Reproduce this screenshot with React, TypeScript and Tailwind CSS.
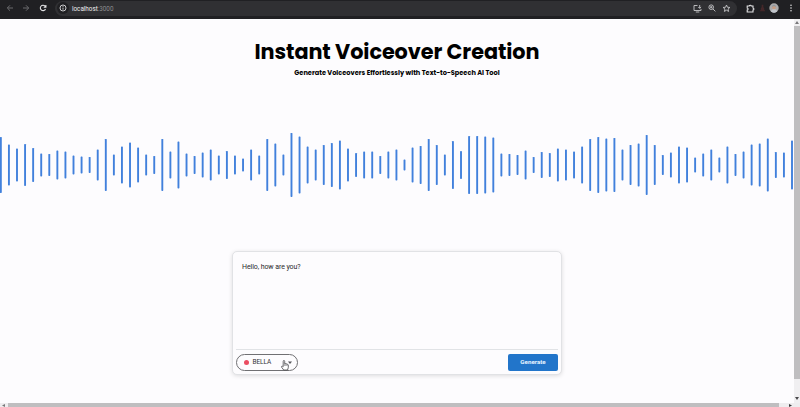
import React from "react";

const heights = [
  56, 41, 33, 42, 34, 23, 22, 29, 27, 19, 17, 16, 31, 52, 21, 37, 45, 35, 21, 18, 52, 27, 47, 23, 18,
  25, 31, 19, 28, 19, 13, 31, 19, 52, 43, 21, 64, 57, 37, 31, 40, 44, 49, 33, 24, 27, 27, 18, 27, 31,
  11, 35, 38, 52, 40, 21, 48, 28, 58, 58, 57, 55, 23, 22, 20, 29, 16, 26, 24, 33, 31, 27, 37, 52, 56,
  53, 54, 31, 40, 43, 60, 40, 20, 25, 37, 35, 15, 23, 31, 15, 37, 22, 27, 41, 43, 53, 26, 25, 49,
];

function BrowserBar() {
  return (
    <header className="flex h-[19px] shrink-0 items-center bg-[#202023] pb-[3px] text-[#c7c7c9]">
      <svg className="ml-[6px] h-2 w-2 text-[#6b6b6e]" viewBox="0 0 8 8" fill="none" stroke="currentColor">
        <path d="M7 4H1.5M4 1.3 1.3 4 4 6.7" />
      </svg>
      <svg className="ml-2 h-2 w-2 text-[#6b6b6e]" viewBox="0 0 8 8" fill="none" stroke="currentColor">
        <path d="M1 4h5.500M4 1.300 6.700 4 4 6.700" />
      </svg>
      <svg className="ml-[9px] h-2 w-2 text-[#e4e4e6]" viewBox="0 0 8 8" fill="none" stroke="currentColor" strokeWidth="1.100">
        <path d="M6.500 5A2.700 2.700 0 1 1 6 2.100L6.700 3M6.900 1v2.200H4.700" />
      </svg>
      <div className="ml-2 flex h-[15px] w-[682px] items-center rounded-full bg-[#303033]">
        <span className="ml-[2px] flex h-[12px] w-[12px] items-center justify-center rounded-full bg-[#202023]">
          <svg className="h-2 w-2" viewBox="0 0 8 8" fill="none" stroke="#dededf" strokeWidth="0.900">
            <circle cx="4" cy="4" r="3" />
            <path d="M4 3.600V5.700M4 2v.8" />
          </svg>
        </span>
        <span className="ml-[3px] mt-px font-[Roboto,sans-serif] text-[6.3px] leading-[10px] text-[#eeeeef]">
          localhost<span className="text-[#8c8c8f]">:3000</span>
        </span>
        <svg className="ml-auto h-[9px] w-[9px]" viewBox="0 0 9 9" fill="none" stroke="currentColor" strokeWidth="0.900">
          <path d="M4.500 1.500H1v5h7V5M2.800 8h3.500M6.700 1v3.200M5.300 3 6.700 4.400 8.100 3" />
        </svg>
        <svg className="ml-[6px] h-2 w-2" viewBox="0 0 8 8" fill="none" stroke="currentColor" strokeWidth="0.900">
          <circle cx="3.200" cy="3.200" r="2.300" />
          <path d="M4.900 4.900 7.400 7.400M2 3.200h2.400M3.200 2v2.400" />
        </svg>
        <svg className="ml-[6px] mr-[6px] h-[9px] w-[9px]" viewBox="0 0 9 9" fill="none" stroke="currentColor" strokeWidth="0.900">
          <path d="m4.500 1 .95 2.250 2.450.2-1.850 1.600.55 2.400-2.100-1.270-2.100 1.270.55-2.400L1.100 3.450l2.450-.2Z" />
        </svg>
      </div>
      <svg className="ml-[9px] h-[9px] w-[9px] text-[#e2e2e4]" viewBox="0 0 9 9" fill="none" stroke="currentColor" strokeWidth="1.100">
        <path d="M1.200 2H3.200C3.200.9 5.200.9 5.200 2H7v2c1.200 0 1.200 2 0 2v2H1.200V6c1.200 0 1.200-2 0-2Z" />
      </svg>
      <svg className="ml-[5px] h-2 w-[5px]" viewBox="0 0 6 8" fill="#442729">
        <path d="M2 0h2v3l1 1v2l1 1v1H0V7l1-1V4l1-1Z" />
      </svg>
      <svg className="ml-[4px] h-[10px] w-[10px]" viewBox="0 0 10 10">
        <circle cx="5" cy="5" r="4.700" fill="#aaa9aa" />
        <path d="M2 8.500C2 5 8 5 8 8.500A4.700 4.700 0 0 1 2 8.500" fill="#c1c5cb" />
        <circle cx="5" cy="4.400" r="1.900" fill="#c79c82" />
        <path d="M3 4c0-3 4-3 4 0L5 3Z" fill="#8c969e" />
      </svg>
      <svg className="ml-[10px] h-2 w-[4px]" viewBox="0 0 4 8" fill="#dddddf">
        <circle cx="2" cy="1.200" r=".8" />
        <circle cx="2" cy="4" r=".8" />
        <circle cx="2" cy="6.800" r=".8" />
      </svg>
    </header>
  );
}

function Waveform() {
  return (
    <svg className="mt-[54px] block h-[66px] w-full shrink-0" viewBox="0 0 794 66" preserveAspectRatio="none">
      {heights.map((h, i) => (
        <rect key={i} x={i * 8.073 - 0.1} y={32.9 - h / 2} width="1.900" height={h} rx="0.700" fill="#4180dc" />
      ))}
    </svg>
  );
}

function VoiceCard() {
  return (
    <section className="mx-auto mt-[53px] flex h-[124px] w-[330px] shrink-0 flex-col rounded-[5px] border border-[#e1e2e5] bg-[#fdfcfe] px-[3px] shadow-[0_1px_4px_rgba(0,0,0,0.13)]">
      <div className="h-[98px] border-b border-[#e1e3e6] px-[6px] pt-[10px] font-[Roboto,sans-serif] text-[7px] leading-[10px] tracking-[-0.08px] text-[#29292c]">
        Hello, how are you?
      </div>
      <div className="mt-[4px] flex items-start justify-between">
        <button className="relative flex h-[17px] w-[62px] items-center rounded-full border border-[#707073] pl-[7px] font-[Roboto,sans-serif] text-[6.5px] tracking-[-0.1px] text-[#363639]">
          <span className="mr-[3.5px] h-[5px] w-[5px] rounded-full bg-[#eb4d62]" />
          BELLA
          <svg className="absolute right-[5px] top-[6px] h-[4px] w-[4px]" viewBox="0 0 4 4" fill="#55555a">
            <path d="M0 .5h4L2 3Z" />
          </svg>
          <svg className="absolute left-[44px] top-[5px] h-[11px] w-[8px]" viewBox="0 0 8 11" fill="#fff" stroke="#46464a" strokeWidth=".8" strokeLinejoin="round">
            <path d="M2.200 6.700V1.400c0-1.300 1.500-1.300 1.500 0v2.500c.2-.6 1.200-.5 1.200.2.300-.5 1.200-.3 1.200.4.400-.4 1.200-.1 1.200.6v2.500L6.500 10H2.700L.6 7.200c-.5-.8.400-1.400 1-.9Z" />
            <path d="M3.700 4v2M4.900 4.200V6M6.100 4.700V6" strokeWidth=".5" />
          </svg>
        </button>
        <button className="h-[17px] w-[50px] rounded-[2px] bg-[#2275ca] font-[Roboto,sans-serif] text-[6.2px] font-bold leading-[17px] text-[#e8f3ff]">
          Generate
        </button>
      </div>
    </section>
  );
}

function VerticalScrollbar() {
  return (
    <aside className="flex w-[6px] shrink-0 flex-col items-center bg-[#f0eff1]">
      <svg className="my-[2px] h-[3px] w-[4px] shrink-0" viewBox="0 0 4 3" fill="#78777a"><path d="M0 3h4L2 0Z" /></svg>
      <div className="h-[353px] w-full shrink-0 bg-[#bfbec0]" />
      <svg className="mt-[18px] h-[3px] w-[4px] shrink-0" viewBox="0 0 4 3" fill="#49484b"><path d="M0 0h4L2 3Z" /></svg>
    </aside>
  );
}

export default function App() {
  return (
    <div className="flex h-[407px] w-[800px] flex-col overflow-hidden bg-[#fdfcfe]">
      <BrowserBar />
      <div className="flex h-[384px] shrink-0">
        <main className="flex w-[794px] flex-col bg-[#fdfcfe] text-center text-black">
          <h1 className="mt-[19px] whitespace-nowrap font-[Poppins,Inter,sans-serif] text-[20.8px] font-bold leading-[28px] tracking-[-0.08px]">
            Instant Voiceover Creation
          </h1>
          <p className="mt-[2px] whitespace-nowrap font-[Poppins,Inter,sans-serif] text-[6.6px] font-bold leading-[10px]">
            Generate Voiceovers Effortlessly with Text-to-Speech AI Tool
          </p>
          <Waveform />
          <div className="text-left"><VoiceCard /></div>
        </main>
        <VerticalScrollbar />
      </div>
      <footer className="flex h-[4px] shrink-0 items-center bg-[#eeedef]">
        <svg className="ml-[2px] h-[3px] w-[3px]" viewBox="0 0 3 3" fill="#777779"><path d="M3 0v3L0 1.500Z" /></svg>
        <div className="ml-[3px] h-[4px] w-[771px] bg-[#bfbec0]" />
        <svg className="ml-[10px] h-[3px] w-[3px]" viewBox="0 0 3 3" fill="#39393b"><path d="M0 0v3l3-1.500Z" /></svg>
      </footer>
    </div>
  );
}
